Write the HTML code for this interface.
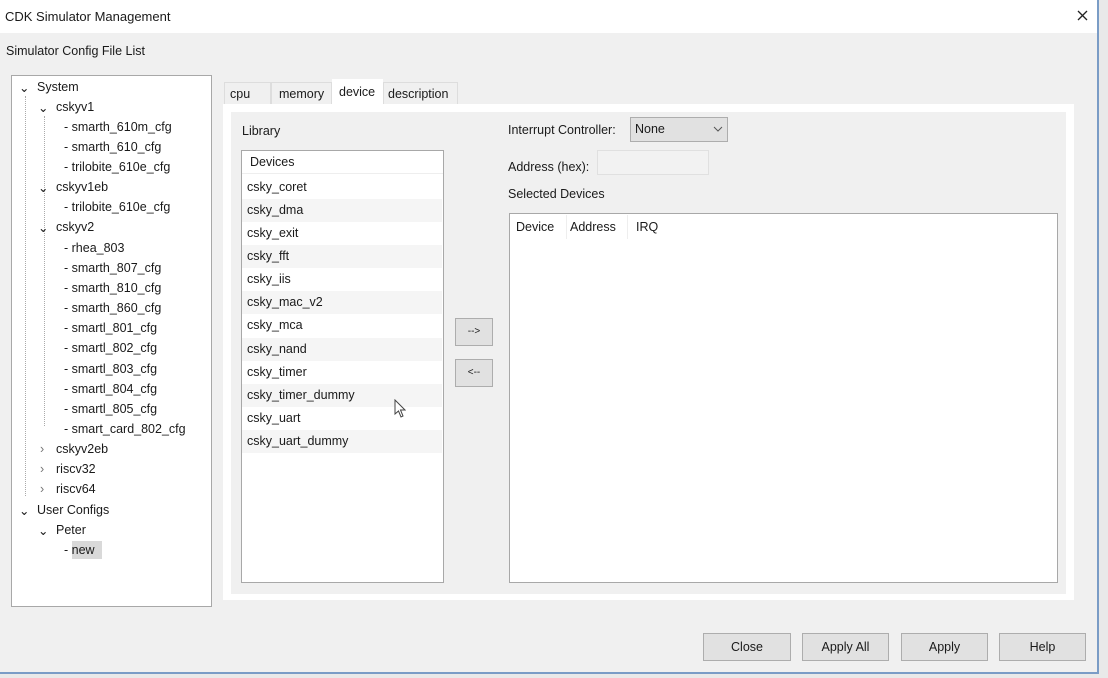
<!DOCTYPE html>
<html><head><meta charset="utf-8"><style>
*{margin:0;padding:0;box-sizing:border-box}
body{width:1108px;height:678px;background:#e9e9e9;font-family:"Liberation Sans",sans-serif;font-size:12.5px;color:#1a1a1a;position:relative;overflow:hidden}
.abs{position:absolute}
.win{left:0;top:0;width:1099px;height:674px;background:#f0f0f0;border-right:2px solid #7a9cc6;border-bottom:2px solid #7a9cc6}
.title{left:0;top:0;width:1097px;height:33px;background:#fff}
.box{background:#fff;border:1px solid #a8a8a8}
.t{position:absolute;white-space:nowrap}
.btn{position:absolute;background:#e1e1e1;border:1px solid #adadad;text-align:center;line-height:26px}
.row{position:absolute;left:1px;width:199px;height:23px;line-height:23px;padding-left:5px}
</style></head><body>
<div class="abs win"></div>
<div class="abs title"></div>
<div class="t" style="left:5px;top:9px;font-size:13px">CDK Simulator Management</div>
<svg class="abs" style="left:1077px;top:10px" width="11" height="11"><path d="M1 1 L10 10 M10 1 L1 10" stroke="#222" stroke-width="1.3"/></svg>
<div class="t" style="left:6px;top:44px">Simulator Config File List</div>

<div class="abs box" style="left:11px;top:75px;width:201px;height:532px"></div>
<div class="abs" style="left:25px;top:96px;height:400px;border-left:1px dotted #aaa"></div>
<div class="abs" style="left:44px;top:116px;height:310px;border-left:1px dotted #aaa"></div>
<div style="position:absolute;left:0;top:0;font-size:12.5px">
<div class="t" style="left:19px;top:80px">⌄</div><div class="t" style="left:37px;top:80px">System</div>
<div class="t" style="left:38px;top:100px">⌄</div><div class="t" style="left:56px;top:100px">cskyv1</div>
<div class="t" style="left:64px;top:120px">- smarth_610m_cfg</div>
<div class="t" style="left:64px;top:140px">- smarth_610_cfg</div>
<div class="t" style="left:64px;top:160px">- trilobite_610e_cfg</div>
<div class="t" style="left:38px;top:180px">⌄</div><div class="t" style="left:56px;top:180px">cskyv1eb</div>
<div class="t" style="left:64px;top:200px">- trilobite_610e_cfg</div>
<div class="t" style="left:38px;top:220px">⌄</div><div class="t" style="left:56px;top:220px">cskyv2</div>
<div class="t" style="left:64px;top:241px">- rhea_803</div>
<div class="t" style="left:64px;top:261px">- smarth_807_cfg</div>
<div class="t" style="left:64px;top:281px">- smarth_810_cfg</div>
<div class="t" style="left:64px;top:301px">- smarth_860_cfg</div>
<div class="t" style="left:64px;top:321px">- smartl_801_cfg</div>
<div class="t" style="left:64px;top:341px">- smartl_802_cfg</div>
<div class="t" style="left:64px;top:362px">- smartl_803_cfg</div>
<div class="t" style="left:64px;top:382px">- smartl_804_cfg</div>
<div class="t" style="left:64px;top:402px">- smartl_805_cfg</div>
<div class="t" style="left:64px;top:422px">- smart_card_802_cfg</div>
<div class="t" style="left:40px;top:442px;color:#777">›</div><div class="t" style="left:56px;top:442px">cskyv2eb</div>
<div class="t" style="left:40px;top:462px;color:#777">›</div><div class="t" style="left:56px;top:462px">riscv32</div>
<div class="t" style="left:40px;top:482px;color:#777">›</div><div class="t" style="left:56px;top:482px">riscv64</div>
<div class="t" style="left:19px;top:503px">⌄</div><div class="t" style="left:37px;top:503px">User Configs</div>
<div class="t" style="left:38px;top:523px">⌄</div><div class="t" style="left:56px;top:523px">Peter</div>
<div class="abs" style="left:72px;top:541px;width:30px;height:18px;background:#d9d9d9"></div>
<div class="t" style="left:64px;top:543px">- new</div>
</div>

<!-- tabs -->
<div class="abs" style="left:224px;top:82px;width:47px;height:23px;background:#f0f0f0;border:1px solid #ddd;border-bottom:none"></div>
<div class="t" style="left:230px;top:87px">cpu</div>
<div class="abs" style="left:271px;top:82px;width:61px;height:23px;border:1px solid #ddd;border-bottom:none"></div>
<div class="t" style="left:279px;top:87px">memory</div>
<div class="abs" style="left:332px;top:79px;width:51px;height:27px;background:#fff"></div>
<div class="t" style="left:339px;top:85px">device</div>
<div class="abs" style="left:383px;top:82px;width:75px;height:23px;border:1px solid #ddd;border-bottom:none"></div>
<div class="t" style="left:388px;top:87px">description</div>
<div class="abs" style="left:223px;top:104px;width:851px;height:496px;background:#fff"></div>
<div class="abs" style="left:231px;top:112px;width:835px;height:482px;background:#f0f0f0"></div>

<div class="t" style="left:242px;top:124px">Library</div>
<div class="abs box" style="left:241px;top:150px;width:203px;height:433px"></div>
<div class="row" style="left:242px;top:151px;width:201px;padding-left:8px;border-bottom:1px solid #eee">Devices</div>
<div class="row" style="left:242px;top:176px;width:200px">csky_coret</div>
<div class="row" style="left:242px;top:199px;width:200px;background:#f5f5f5">csky_dma</div>
<div class="row" style="left:242px;top:222px;width:200px">csky_exit</div>
<div class="row" style="left:242px;top:245px;width:200px;background:#f5f5f5">csky_fft</div>
<div class="row" style="left:242px;top:268px;width:200px">csky_iis</div>
<div class="row" style="left:242px;top:291px;width:200px;background:#f5f5f5">csky_mac_v2</div>
<div class="row" style="left:242px;top:314px;width:200px">csky_mca</div>
<div class="row" style="left:242px;top:338px;width:200px;background:#f5f5f5">csky_nand</div>
<div class="row" style="left:242px;top:361px;width:200px">csky_timer</div>
<div class="row" style="left:242px;top:384px;width:200px;background:#f5f5f5">csky_timer_dummy</div>
<div class="row" style="left:242px;top:407px;width:200px">csky_uart</div>
<div class="row" style="left:242px;top:430px;width:200px;background:#f5f5f5">csky_uart_dummy</div>
<svg class="abs" style="left:394px;top:399px" width="12" height="20"><path d="M1 1 L1 15 L4.5 12 L7 18 L9 17 L6.5 11 L11 11 Z" fill="#fff" stroke="#444"/></svg>

<div class="btn" style="left:455px;top:318px;width:38px;height:28px;font-size:10px">--&gt;</div>
<div class="btn" style="left:455px;top:359px;width:38px;height:28px;font-size:10px">&lt;--</div>

<div class="t" style="left:508px;top:123px">Interrupt Controller:</div>
<div class="abs" style="left:630px;top:117px;width:98px;height:25px;background:#e1e1e1;border:1px solid #adadad"></div>
<div class="t" style="left:635px;top:122px">None</div>
<svg class="abs" style="left:713px;top:126px" width="10" height="7"><path d="M1 1 L5 5 L9 1" stroke="#555" fill="none"/></svg>
<div class="t" style="left:508px;top:160px">Address (hex):</div>
<div class="abs" style="left:597px;top:150px;width:112px;height:25px;background:#f2f2f2;border:1px solid #e0e0e0"></div>
<div class="t" style="left:508px;top:187px">Selected Devices</div>
<div class="abs box" style="left:509px;top:213px;width:549px;height:370px"></div>
<div class="t" style="left:516px;top:220px">Device</div>
<div class="abs" style="left:566px;top:215px;width:1px;height:24px;background:#eee"></div>
<div class="t" style="left:570px;top:220px">Address</div>
<div class="abs" style="left:627px;top:215px;width:1px;height:24px;background:#eee"></div>
<div class="t" style="left:636px;top:220px">IRQ</div>

<div class="btn" style="left:703px;top:633px;width:88px;height:28px">Close</div>
<div class="btn" style="left:802px;top:633px;width:87px;height:28px">Apply All</div>
<div class="btn" style="left:901px;top:633px;width:87px;height:28px">Apply</div>
<div class="btn" style="left:999px;top:633px;width:87px;height:28px">Help</div>
</body></html>
